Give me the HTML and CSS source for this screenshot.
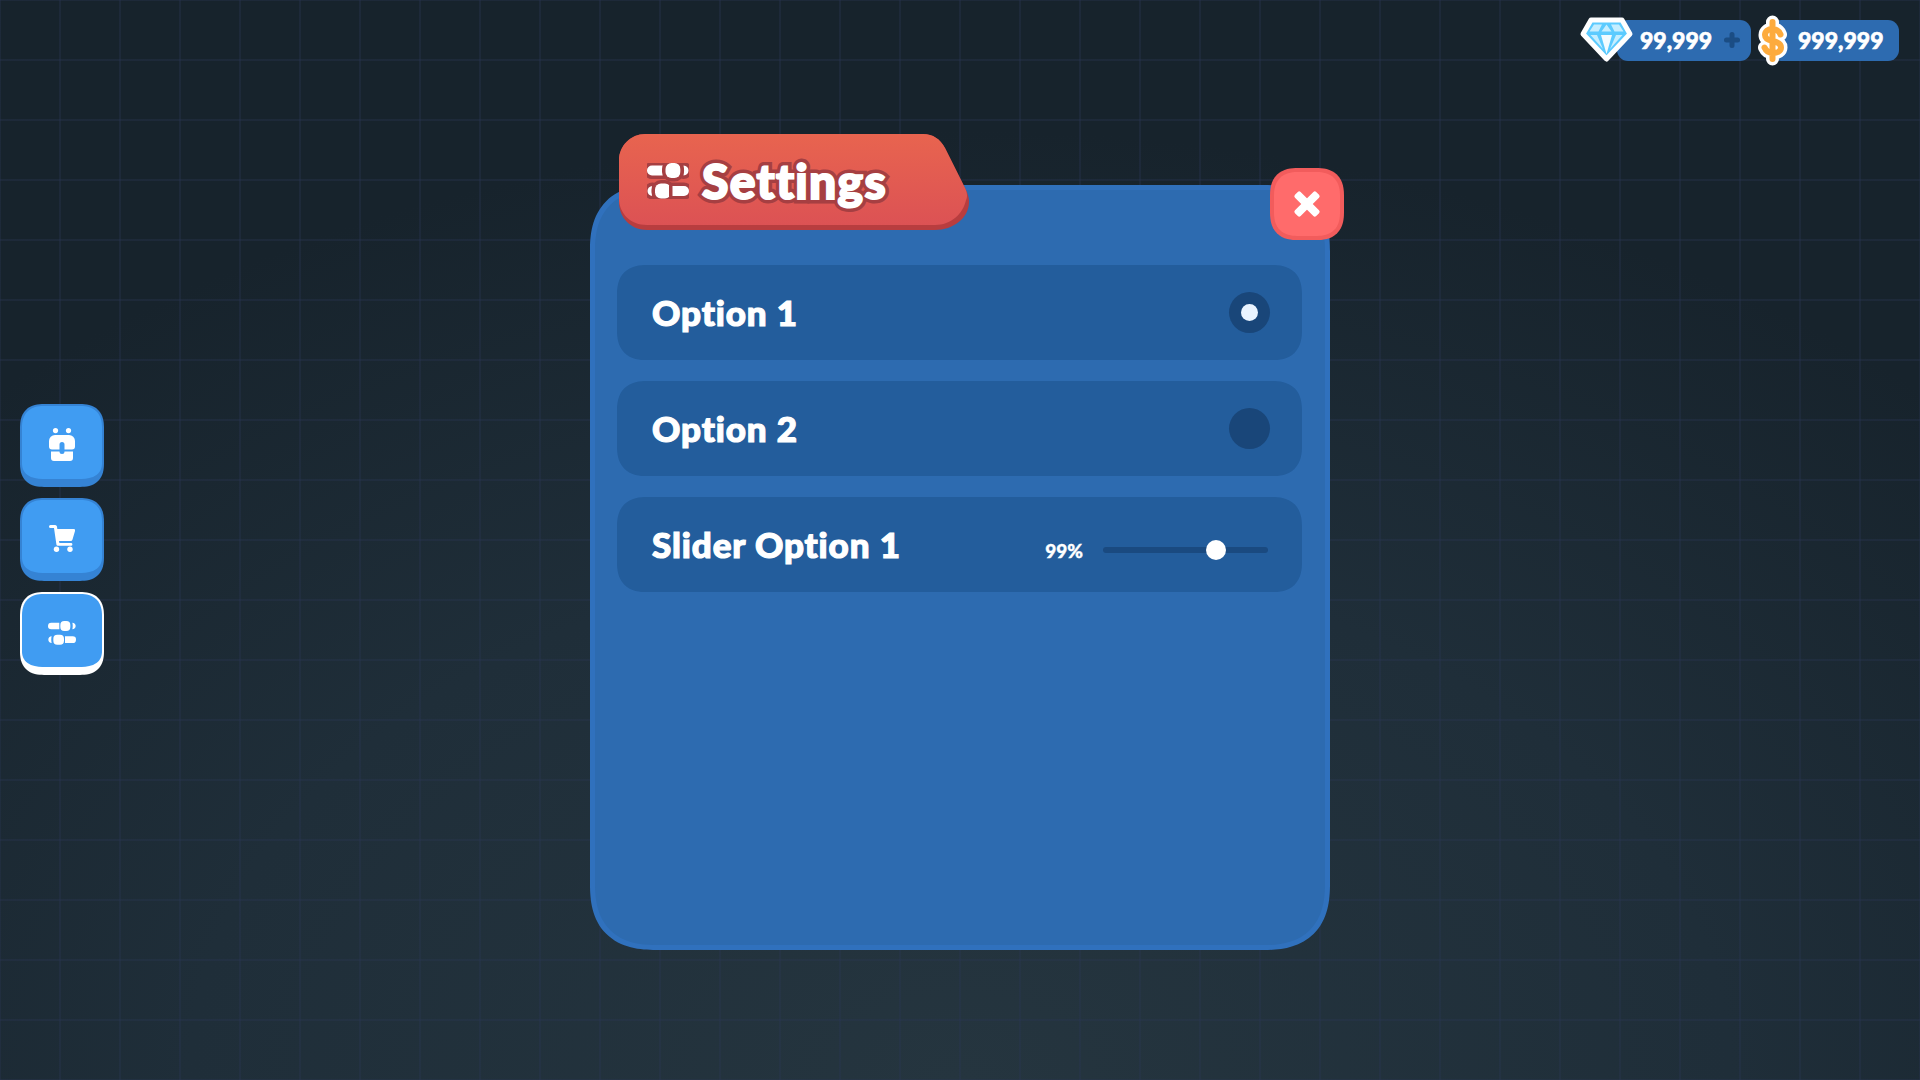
FILE: index.html
```html
<!DOCTYPE html>
<html lang="en">
<head>
<meta charset="utf-8">
<title>Settings</title>
<link rel="stylesheet" href="styles.css">
</head>
<body>
<svg class="defs" width="0" height="0" aria-hidden="true">
  <defs>
    <symbol id="sliders" viewBox="0 0 42 36">
      <path d="M5 2.500h12v10H5a5 5 0 0 1 0-10z"/>
      <rect x="18.500" y="0" width="15" height="15" rx="6"/>
      <path d="M36.500 2.500c3 .2 5 2.200 5 5s-2 4.800-5 5c.8-3 .8-7 0-10z"/>
      <path d="M5.500 23c-.8 3-.8 7 0 10-3-.2-5-2.200-5-5s2-4.800 5-5z"/>
      <rect x="8" y="20.500" width="16" height="15" rx="6"/>
      <path d="M25.500 23H37a5 5 0 0 1 0 10H25.500z"/>
    </symbol>
  </defs>
</svg>
<div class="page">
  <nav class="sidebar">
    <button class="side-btn">
      <svg class="side-icon icon-pack" viewBox="0 0 26 33">
        <circle cx="6.500" cy="2.600" r="2.600"/><circle cx="19.500" cy="2.600" r="2.600"/>
        <path d="M6 7h14a6 6 0 0 1 6 6v5.500a3 3 0 0 1-3 3h-7.500v-5a2.500 2.500 0 0 0-5 0v5H3a3 3 0 0 1-3-3V13a6 6 0 0 1 6-6z"/>
        <path d="M2 23.500h8.500a2.500 2.500 0 0 0 5 0H24V30a3 3 0 0 1-3 3H5a3 3 0 0 1-3-3z"/>
      </svg>
    </button>
    <button class="side-btn">
      <svg class="side-icon icon-cart" viewBox="0 0 26 27">
        <path d="M1.500 0H6a2 2 0 0 1 2 1.600L8.300 4H24.500a1.500 1.500 0 0 1 1.500 1.900L23.500 14.500a2 2 0 0 1-2 1.500H10l.4 2H22a1.300 1.300 0 0 1 0 2.800H9a1.600 1.600 0 0 1-1.600-1.400L5 3H1.500a1.500 1.500 0 0 1 0-3z"/>
        <circle cx="7.500" cy="24.300" r="2.700"/><circle cx="21" cy="24.300" r="2.700"/>
      </svg>
    </button>
    <button class="side-btn side-btn-active">
      <svg class="side-icon icon-sliders"><use href="#sliders"/></svg>
    </button>
  </nav>

  <main class="main">
    <section class="panel">
      <header class="title-tag">
        <svg class="title-shape" viewBox="0 0 350 96" preserveAspectRatio="none">
          <defs>
            <linearGradient id="titleFill" x1="0" y1="0" x2="0" y2="1">
              <stop offset="0" stop-color="#e8644f"/>
              <stop offset="1" stop-color="#dc5254"/>
            </linearGradient>
          </defs>
          <path class="title-lip" d="M26 0H304C314 0 321 5 326 14L346 54C350 62 350 66 350 68C350 84 334 96 316 96H28C12 96 0 84 0 68V26C0 12 12 0 26 0Z"/>
          <path fill="url(#titleFill)" d="M26 0H304C314 0 321 5 326 14L346 54C349 60 348 64 347 66C344 80 332 91 316 91H28C12 91 0 80 0 64V26C0 12 12 0 26 0Z"/>
        </svg>
        <svg class="title-icon"><use href="#sliders"/></svg>
        <h1 class="title-text" data-text="Settings">Settings</h1>
      </header>

      <button class="close-btn" aria-label="Close">
        <svg class="close-icon" viewBox="0 0 28 28">
          <rect x="10" y="-1" width="8" height="30" rx="2" transform="rotate(45 14 14)"/>
          <rect x="10" y="-1" width="8" height="30" rx="2" transform="rotate(-45 14 14)"/>
        </svg>
      </button>

      <div class="rows">
        <div class="row">
          <span class="row-label">Option 1</span>
          <span class="radio"><span class="radio-dot"></span></span>
        </div>
        <div class="row">
          <span class="row-label">Option 2</span>
          <span class="radio"></span>
        </div>
        <div class="row">
          <span class="row-label">Slider Option 1</span>
          <div class="slider">
            <span class="slider-value">99%</span>
            <span class="slider-track"><span class="slider-thumb"></span></span>
          </div>
        </div>
      </div>
    </section>
  </main>

  <div class="wallet">
    <div class="currency currency-gems">
      <svg class="gem" viewBox="0 0 65 60">
        <path class="gem-body" d="M14 10H45L53 24 29.500 49 6 24Z"/>
        <path class="gem-facet" d="M17 14.500H25L21.500 21.500H12.500Z M34 14.500H42L46.500 21.500H37.500Z M29.500 14.500L34.500 21.500H24.500Z M13.500 25H20L26 39Z M39 25H45.500L33 39Z"/>
        <path class="gem-shine" d="M24 25H35L29.500 44Z"/>
      </svg>
      <span class="currency-value">99,999</span>
      <svg class="plus" viewBox="0 0 16 16"><path d="M8 2.500v11M2.500 8h11"/></svg>
    </div>
    <div class="currency currency-cash">
      <svg class="dollar" viewBox="0 0 50 60">
        <path class="dollar-outline" d="M28.500 25.500C27 22 24.500 20 20.500 20C16 20 13 22.500 13 26C13 29.500 16 31 20.500 32C26 33 29 35 29 38.500C29 42 25.500 44 21 44C17 44 14 42 12.500 38.500 M20.500 13V50"/>
        <path class="dollar-fill" d="M28.500 25.500C27 22 24.500 20 20.500 20C16 20 13 22.500 13 26C13 29.500 16 31 20.500 32C26 33 29 35 29 38.500C29 42 25.500 44 21 44C17 44 14 42 12.500 38.500 M20.500 13V50"/>
      </svg>
      <span class="currency-value">999,999</span>
    </div>
  </div>
</div>
</body>
</html>
```
FILE: styles.css
```css
* { box-sizing: border-box; }
html, body { margin: 0; height: 100%; }
body {
  font-family: "Lato", "Noto Sans", sans-serif;
  color: #fff;
  overflow: hidden;
  background-color: #1b2832;
  background-image:
    linear-gradient(rgba(42, 54, 84, .32) 2px, transparent 2px),
    linear-gradient(90deg, rgba(42, 54, 84, .32) 2px, transparent 2px),
    radial-gradient(ellipse 1400px 950px at 50% 100%, #25353f 0%, #1f2e39 55%, #17232c 100%);
  background-size: 60px 60px, 60px 60px, 100% 100%;
  background-position: 0 -1px, -1px 0, 0 0;
}
button { border: 0; padding: 0; font: inherit; color: inherit; }
.defs { position: absolute; }
.page {
  position: relative;
  width: 1920px;
  height: 1080px;
}

/* sidebar */
.sidebar {
  position: absolute;
  left: 20px;
  top: 0;
  bottom: 1px;
  display: flex;
  flex-direction: column;
  justify-content: center;
  gap: 11px;
}
.side-btn {
  width: 84px;
  height: 83px;
  display: flex;
  align-items: center;
  justify-content: center;
  background: #409cf2;
  border: 2px solid #3583d4;
  border-bottom-width: 8px;
  border-radius: 24px;
  corner-shape: superellipse(1.3);
  padding-top: 4px;
}
.side-btn-active { border-color: #fff; }
.side-icon { fill: #fff; display: block; }
.icon-pack { width: 26px; height: 33px; }
.icon-cart { width: 26px; height: 27px; }
.icon-sliders { width: 28px; height: 24px; }

/* panel */
.main {
  display: flex;
  justify-content: center;
  align-items: flex-start;
  padding-top: 185px;
}
.panel {
  position: relative;
  width: 740px;
  height: 765px;
  background: #2d6bb0;
  border: 5px solid #3071bd;
  border-radius: 66px;
  corner-shape: superellipse(1.3);
  padding: 75px 23px 0 22px;
}
.rows { display: flex; flex-direction: column; gap: 21px; }
.row {
  height: 95px;
  display: flex;
  align-items: center;
  justify-content: space-between;
  background: #235d9c;
  border-radius: 30px;
  corner-shape: superellipse(1.3);
  padding: 0 32px 0 35px;
}
.row-label {
  font-size: 35px;
  font-weight: 900;
  letter-spacing: .9px;
  padding-bottom: 2px;
  -webkit-text-stroke: 1.2px #fff;
}
.radio {
  width: 41px;
  height: 41px;
  border-radius: 50%;
  background: #194679;
  display: flex;
  align-items: center;
  justify-content: center;
}
.radio-dot { width: 17px; height: 17px; border-radius: 50%; background: #eaf4ff; }
.slider { display: flex; align-items: center; gap: 20px; margin-right: 2px; padding-top: 10px; }
.slider-value { font-size: 19px; font-weight: 900; padding-top: 1px; -webkit-text-stroke: .4px #fff; }
.slider-track {
  position: relative;
  display: block;
  width: 165px;
  height: 6px;
  border-radius: 3px;
  background: #1a4a80;
}
.slider-thumb {
  position: absolute;
  left: 103px;
  top: -7px;
  width: 20px;
  height: 20px;
  border-radius: 50%;
  background: #fff;
}

/* title */
.title-tag {
  position: absolute;
  left: 24px;
  top: -56px;
  width: 350px;
  height: 96px;
  display: flex;
  align-items: center;
  gap: 13px;
  padding: 0 0 3px 28px;
}
.title-shape { position: absolute; inset: 0; width: 100%; height: 100%; }
.title-lip { fill: #b83d3f; }
.title-icon {
  position: relative;
  width: 42px;
  height: 36px;
  overflow: visible;
  fill: #fff;
  stroke: #a63f42;
  stroke-width: 7px;
  paint-order: stroke;
  stroke-linejoin: round;
}
.title-text {
  position: relative;
  margin: 0;
  font-size: 48px;
  font-weight: 900;
  line-height: 1;
  letter-spacing: 1.3px;
  -webkit-text-stroke: 9px #a63f42;
  color: #fff;
}
.title-text::after {
  content: attr(data-text);
  position: absolute;
  left: 0;
  top: 0;
  -webkit-text-stroke: 2px #fff;
}

/* close */
.close-btn {
  position: absolute;
  right: -19px;
  top: -22px;
  width: 74px;
  height: 72px;
  display: flex;
  align-items: center;
  justify-content: center;
  background: #ff6b6b;
  border: 4px solid #f25c5c;
  border-radius: 28px;
  corner-shape: superellipse(1.3);
}
.close-icon { width: 28px; height: 28px; fill: #fff; margin-bottom: 1px; }

/* wallet */
.wallet {
  position: absolute;
  top: 20px;
  right: 21px;
  display: flex;
  gap: 19px;
}
.currency {
  position: relative;
  height: 41px;
  display: flex;
  align-items: center;
  background: #2d6bb0;
  border-radius: 11px;
}
.currency-value {
  position: relative;
  font-size: 23px;
  font-weight: 900;
  padding-bottom: 2px;
  -webkit-text-stroke: .6px #fff;
}
.currency-gems { width: 134px; padding-left: 23px; }
.currency-cash { width: 129px; padding-left: 28px; }
.gem { position: absolute; left: -40px; top: -10px; width: 65px; height: 60px; }
.gem-body { fill: #5ccbff; stroke: #fff; stroke-width: 5px; stroke-linejoin: round; }
.gem-facet { fill: #c5eeff; }
.gem-shine { fill: #f2fbff; }
.plus { width: 16px; height: 16px; margin: 0 0 1px 12px; fill: none; stroke: #1b4d84; stroke-width: 5px; stroke-linecap: round; }
.dollar { position: absolute; left: -18px; top: -11px; width: 50px; height: 60px; fill: none; stroke-linecap: round; stroke-linejoin: round; }
.dollar-outline { stroke: #fff; stroke-width: 13px; }
.dollar-fill { stroke: #fdab3d; stroke-width: 6px; }
```
